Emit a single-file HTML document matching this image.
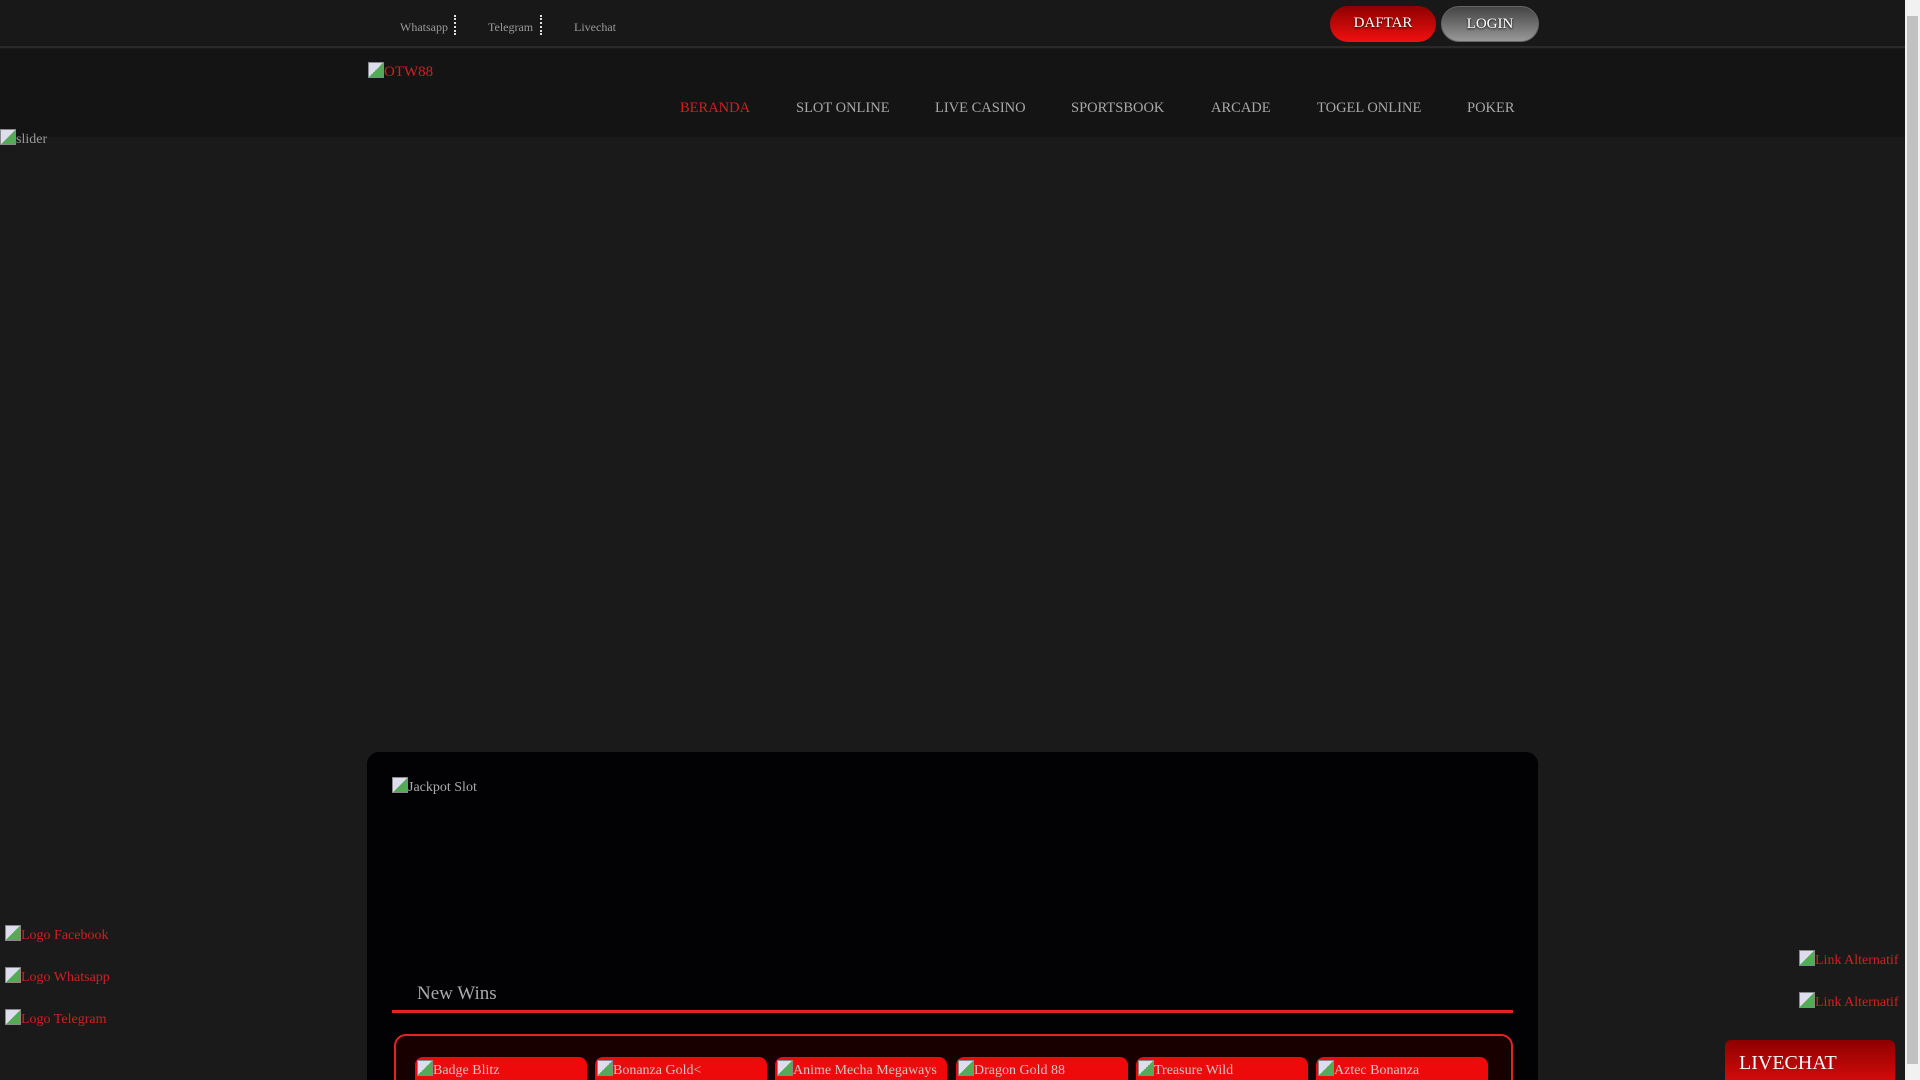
<!DOCTYPE html>
<html style="overflow:hidden;height:1080px"><head><meta charset="utf-8"><style>
*{margin:0;padding:0;box-sizing:border-box}
body{width:1920px;height:1080px;overflow:hidden;background:#1a1a1a;font-family:"Liberation Serif",serif;position:relative}
.a{position:absolute;white-space:nowrap}
.top{position:absolute;left:0;top:0;width:1905px;height:48px;background:#181818;border-bottom:2px solid #2a2a2a}
.nav{position:absolute;left:0;top:49px;width:1905px;height:88px;background:#141414}
.tl{font-size:12px;color:#9a9a9a;top:20px}
.sep{position:absolute;top:15px;width:0;height:20px;border-left:2px dotted #ddd}
.btn{position:absolute;top:6px;height:36px;border-radius:18px;color:#fff;font-size:15px;text-align:center;line-height:34px;text-shadow:0 1px 2px #000}
.n{font-size:14.5px;color:#a8a8a8;top:100px}
.red{color:#d02020}
.ic{display:inline-block;width:16px;height:16px;vertical-align:-2px;background:linear-gradient(135deg,#dde 0 50%,#5a5 50%);border:1px solid #888}
.card{position:absolute;top:1057px;width:172px;height:40px;background:#ee0a0a;border-radius:8px 8px 0 0;color:#c8c8c8;font-size:14px;padding:3px 2px;font-family:"Liberation Serif",serif}
</style></head><body>
<div class="top"></div>
<div class="a tl" style="left:400px">Whatsapp</div>
<div class="sep" style="left:454px"></div>
<div class="a tl" style="left:488px">Telegram</div>
<div class="sep" style="left:540px"></div>
<div class="a tl" style="left:574px">Livechat</div>
<div class="btn" style="left:1330px;width:106px;background:linear-gradient(#8e0000,#f21010)">DAFTAR</div>
<div class="btn" style="left:1441px;width:98px;background:linear-gradient(#444,#999);border:1px solid #666">LOGIN</div>
<div class="nav"></div>
<div class="a red" style="left:368px;top:62px;font-size:15px"><span class="ic"></span>OTW88</div>
<div class="a n red" style="left:680px">BERANDA</div>
<div class="a n" style="left:796px">SLOT ONLINE</div>
<div class="a n" style="left:935px">LIVE CASINO</div>
<div class="a n" style="left:1071px">SPORTSBOOK</div>
<div class="a n" style="left:1211px">ARCADE</div>
<div class="a n" style="left:1317px">TOGEL ONLINE</div>
<div class="a n" style="left:1467px">POKER</div>
<div class="a" style="left:0;top:129px;color:#999;font-size:14px"><span class="ic"></span>slider</div>
<div class="a" style="left:367px;top:752px;width:1171px;height:360px;background:#020205;border-radius:12px"></div>
<div class="a" style="left:392px;top:777px;color:#aaa;font-size:14px"><span class="ic"></span>Jackpot Slot</div>
<div class="a" style="left:417px;top:983px;color:#aaa;font-size:19px">New Wins</div>
<div class="a" style="left:392px;top:1010px;width:1121px;height:3px;background:#e02424"></div>
<div class="a" style="left:394px;top:1034px;width:1119px;height:80px;background:#180000;border:2px solid #e02424;border-radius:12px 12px 0 0"></div>
<div class="card" style="left:415px"><span class="ic"></span>Badge Blitz</div>
<div class="card" style="left:595px"><span class="ic"></span>Bonanza Gold&lt;</div>
<div class="card" style="left:775px"><span class="ic"></span>Anime Mecha Megaways</div>
<div class="card" style="left:956px"><span class="ic"></span>Dragon Gold 88</div>
<div class="card" style="left:1136px"><span class="ic"></span>Treasure Wild</div>
<div class="card" style="left:1316px"><span class="ic"></span>Aztec Bonanza</div>
<div class="a red" style="left:5px;top:925px;font-size:14px"><span class="ic"></span>Logo Facebook</div>
<div class="a red" style="left:5px;top:967px;font-size:14px"><span class="ic"></span>Logo Whatsapp</div>
<div class="a red" style="left:5px;top:1009px;font-size:14px"><span class="ic"></span>Logo Telegram</div>
<div class="a red" style="left:1799px;top:950px;font-size:14px"><span class="ic"></span>Link Alternatif</div>
<div class="a red" style="left:1799px;top:992px;font-size:14px"><span class="ic"></span>Link Alternatif</div>
<div class="a" style="left:1725px;top:1040px;width:170px;height:60px;background:linear-gradient(#8e0000,#f21010);border-radius:6px 6px 0 0;color:#fff;font-size:20px;padding:12px 0 0 14px">LIVECHAT</div>
<div class="a" style="left:1905px;top:0;width:15px;height:1080px;background:#f1f1f1"></div>
<div class="a" style="left:1907px;top:16px;width:11px;height:1048px;background:#c1c1c1"></div>
</body></html>
